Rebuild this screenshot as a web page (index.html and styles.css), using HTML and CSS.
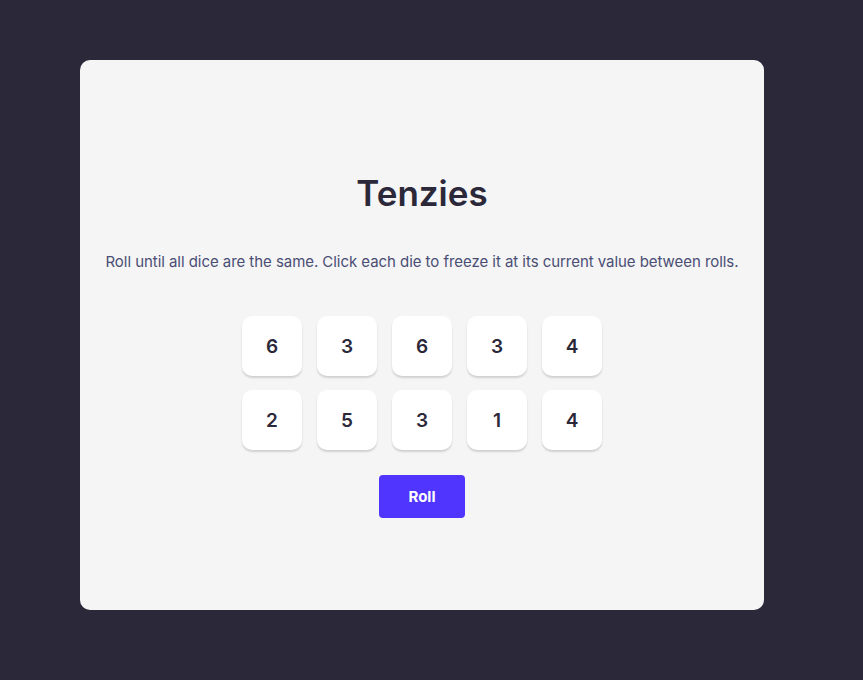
FILE: index.html
```html
<!DOCTYPE html>
<html lang="en">
<head>
<meta charset="utf-8">
<title>Tenzies</title>
<link rel="stylesheet" href="styles.css">
</head>
<body>
<main class="card">
  <h1 class="title">Tenzies</h1>
  <p class="instructions">Roll until all dice are the same. Click each die to freeze it at its current value between rolls.</p>
  <div class="dice">
    <button class="die">6</button>
    <button class="die">3</button>
    <button class="die">6</button>
    <button class="die">3</button>
    <button class="die">4</button>
    <button class="die">2</button>
    <button class="die">5</button>
    <button class="die">3</button>
    <button class="die">1</button>
    <button class="die">4</button>
  </div>
  <button class="roll">Roll</button>
</main>
</body>
</html>
```

FILE: styles.css
```css
* { box-sizing: border-box; }
html, body { height: 100%; }
body {
  margin: 0;
  background: #2b283a;
  font-family: Inter, "Noto Sans", sans-serif;
  padding: 60px 0 0 80px;
}
.card {
  width: 684px;
  height: 550px;
  background: #f5f5f5;
  border-radius: 10px;
  display: flex;
  flex-direction: column;
  align-items: center;
  padding-top: 112px;
}
.title {
  margin: 0;
  font-size: 35px;
  line-height: 43px;
  font-weight: 600;
  color: #2b283a;
  letter-spacing: 0;
}
.instructions {
  margin: 37px 0 0;
  font-size: 15px;
  line-height: 19px;
  font-weight: 400;
  color: #4a4e74;
  text-align: center;
  letter-spacing: -0.05px;
}
.dice {
  margin-top: 45px;
  display: grid;
  grid-template-columns: repeat(5, 60px);
  column-gap: 15px;
  row-gap: 14px;
}
.die {
  width: 60px;
  height: 60px;
  border: none;
  border-radius: 10px;
  background: #ffffff;
  box-shadow: 0 2px 2px rgba(0, 0, 0, 0.15);
  font-family: Inter, "Noto Sans", sans-serif;
  font-size: 19px;
  font-weight: 600;
  color: #2b283a;
  padding: 0;
  cursor: pointer;
}
.roll {
  margin-top: 25px;
  width: 86px;
  height: 43px;
  border: none;
  border-radius: 4px;
  background: #5035ff;
  color: #ffffff;
  font-family: Inter, "Noto Sans", sans-serif;
  font-size: 15px;
  font-weight: 700;
  cursor: pointer;
  padding: 0;
}
```
